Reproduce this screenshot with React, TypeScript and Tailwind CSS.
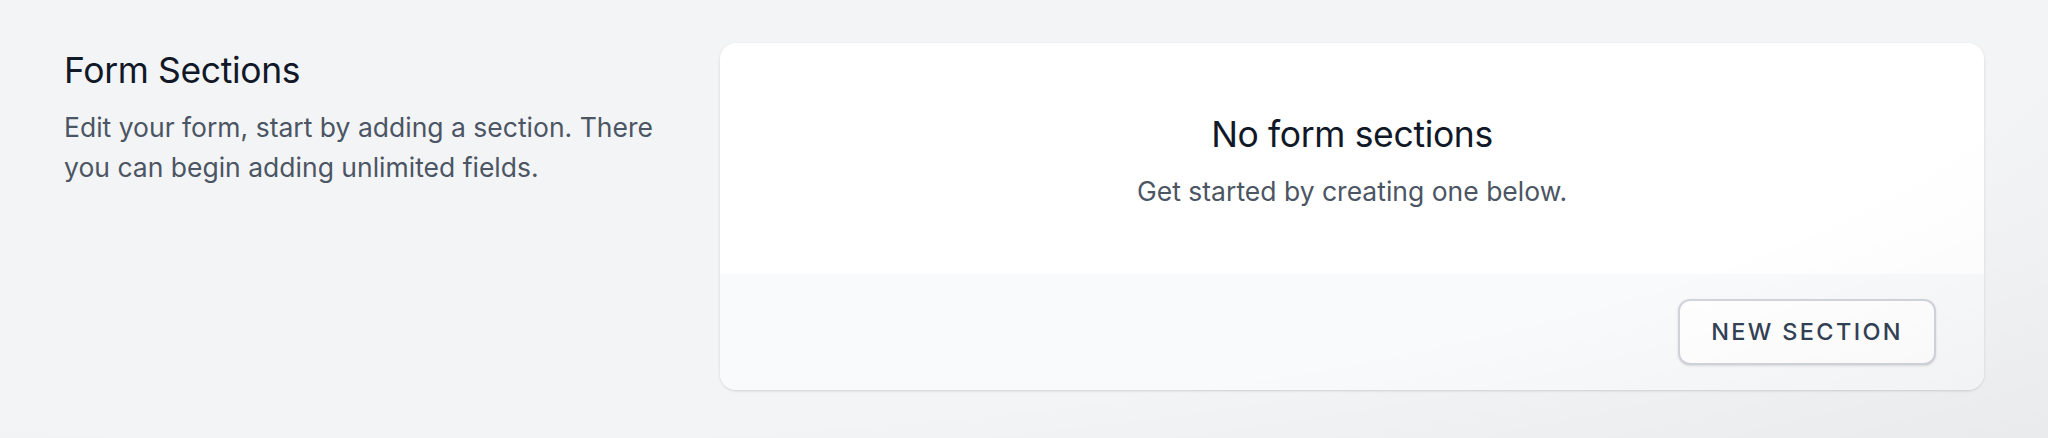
import React from "react";

export default function App() {
  return (
    <div
      className="relative min-h-screen w-full overflow-hidden bg-[#f3f4f6] px-16 pt-[43px] pb-12"
      style={{ fontFamily: "Inter, 'Noto Sans', sans-serif" }}
    >
      <div className="grid grid-cols-3 gap-12">
        <div className="pt-[8px]">
          <h3 className="text-[35.5px] leading-[40px] font-normal text-[#111827] tracking-[-0.01em]">
            Form Sections
          </h3>
          <p className="mt-[16px] text-[26.5px] leading-[40px] text-[#4b5563]">
            Edit your form, start by adding a section. There you can begin adding unlimited fields.
          </p>
        </div>
        <div className="col-span-2 overflow-hidden rounded-2xl bg-white shadow-[0_1px_3px_0_rgba(0,0,0,0.12),0_1px_2px_-1px_rgba(0,0,0,0.1)]">
          <div className="flex h-[231px] flex-col items-center pt-[72px]">
            <h2 className="text-[35.5px] leading-[40px] font-normal text-[#111827] tracking-[-0.01em]">
              No form sections
            </h2>
            <p className="mt-5 text-[26.5px] leading-[32px] text-[#4b5563]">
              Get started by creating one below.
            </p>
          </div>
          <div className="flex justify-end bg-[#f9fafb] px-12 py-[25px]">
            <button className="h-[66px] w-[258px] rounded-xl border-2 border-[#d1d5db] bg-white text-[23.5px] font-medium uppercase tracking-[0.1em] text-[#334155] shadow-sm">
              New Section
            </button>
          </div>
        </div>
      </div>
      <div className="pointer-events-none absolute inset-0 bg-[radial-gradient(ellipse_at_20%_0%,transparent_70%,rgba(0,0,0,0.04)_100%)]" />
    </div>
  );
}
